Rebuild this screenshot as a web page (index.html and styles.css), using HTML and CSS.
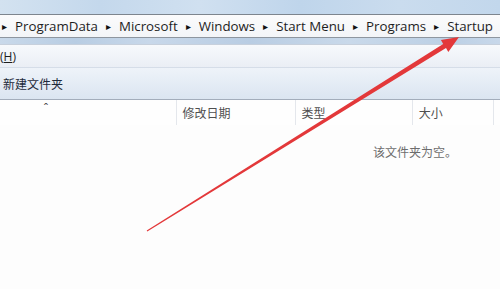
FILE: index.html
```html
<!DOCTYPE html>
<html>
<head>
<meta charset="utf-8">
<link rel="stylesheet" href="styles.css">
</head>
<body>
<div class="window">
  <div class="blur-top"></div>
  <div class="address">
    <span class="sep">&#9656;</span><span class="crumb">ProgramData</span>
    <span class="sep">&#9656;</span><span class="crumb">Microsoft</span>
    <span class="sep">&#9656;</span><span class="crumb">Windows</span>
    <span class="sep">&#9656;</span><span class="crumb">Start Menu</span>
    <span class="sep">&#9656;</span><span class="crumb">Programs</span>
    <span class="sep">&#9656;</span><span class="crumb">Startup</span>
  </div>
  <div class="blur-mid"></div>
  <div class="menubar"><span>(<u>H</u>)</span></div>
  <div class="toolbar"><span>新建文件夹</span></div>
  <div class="header">
    <div class="col col-name"><span class="sort">&#710;</span></div>
    <div class="col col-date">修改日期</div>
    <div class="col col-type">类型</div>
    <div class="col col-size">大小</div>
    <div class="col col-rest"></div>
  </div>
  <div class="content">
    <div class="empty">该文件夹为空。</div>
  </div>
  <svg class="arrow" width="500" height="289" viewBox="0 0 500 289">
    <polygon fill="#e3383a" points="146.7,230.6 147.3,231.4 446.0,48.1 448.3,51.9 459,37 440.9,40.1 443.2,43.9"/>
  </svg>
</div>
</body>
</html>
```
FILE: styles.css
```css
* { box-sizing: border-box; }
html, body { margin: 0; padding: 0; }
body {
  width: 500px;
  height: 289px;
  overflow: hidden;
  background: #fdfdfd;
  font-family: "Open Sans", "Noto Sans", "Noto Sans CJK SC", sans-serif;
}
.window {
  position: relative;
  width: 500px;
  height: 289px;
  display: flex;
  flex-direction: column;
}
.blur-top {
  height: 14px;
  background: linear-gradient(90deg, #d3e2f0 0%, #c4d8ec 20%, #d0e0f0 40%, #bfd5eb 60%, #cadcee 80%, #c2d7ec 100%);
}
.address {
  height: 24px;
  border-top: 1px solid #7d858e;
  border-bottom: 1px solid #8e969f;
  background: linear-gradient(#fbfbfc, #f3f5f8);
  display: flex;
  align-items: center;
  padding-left: 1px;
  font-size: 13.3px;
  color: #1e1e1e;
  white-space: nowrap;
}
.sep {
  font-size: 10px;
  color: #111;
  width: 14px;
  text-align: left;
  padding-left: 1px;
}
.crumb { margin-right: 7px; }
.blur-mid {
  height: 7px;
  background: linear-gradient(90deg, #c9d9ea 0%, #b8cde3 15%, #c8d8ea 30%, #b9cde3 50%, #c9d9ea 70%, #bcd0e5 90%, #c8d8ea 100%);
  border-bottom: 1px solid #c7d0dc;
}
.menubar {
  height: 23px;
  background: linear-gradient(#f7f9fc, #eaeef5);
  display: flex;
  align-items: center;
  font-size: 12px;
  color: #1e1e1e;
  border-bottom: 1px solid #d5dde8;
}
.toolbar {
  height: 32px;
  background: linear-gradient(#eef3f9, #dbe5f1);
  display: flex;
  align-items: center;
  padding-left: 3px;
  font-family: "Noto Sans CJK SC", sans-serif;
  font-size: 12px;
  color: #1e2a3a;
  border-bottom: 1px solid #a3adbb;
}
.header {
  height: 25px;
  display: flex;
  background: #fefefe;
  font-family: "Noto Sans CJK SC", sans-serif;
  font-size: 12px;
  color: #4f4f4f;
}
.col {
  border-right: 1px solid #e4e7ec;
  padding-left: 6px;
  padding-top: 4px;
  position: relative;
}
.col-name { width: 178px; }
.col-date { width: 120px; }
.col-type { width: 118px; }
.col-size { width: 82px; }
.col-rest { flex: 1; border-right: none; }
.sort {
  position: absolute;
  left: 44px;
  top: -1px;
  font-size: 12px;
  color: #444;
}
.content {
  flex: 1;
  background: #fdfdfd;
  display: flex;
  justify-content: flex-end;
}
.empty {
  margin-top: 18px;
  margin-right: 43px;
  font-family: "Noto Sans CJK SC", sans-serif;
  font-size: 12px;
  color: #6d6d6d;
}
.arrow {
  position: absolute;
  left: 0;
  top: 0;
  pointer-events: none;
}
```
